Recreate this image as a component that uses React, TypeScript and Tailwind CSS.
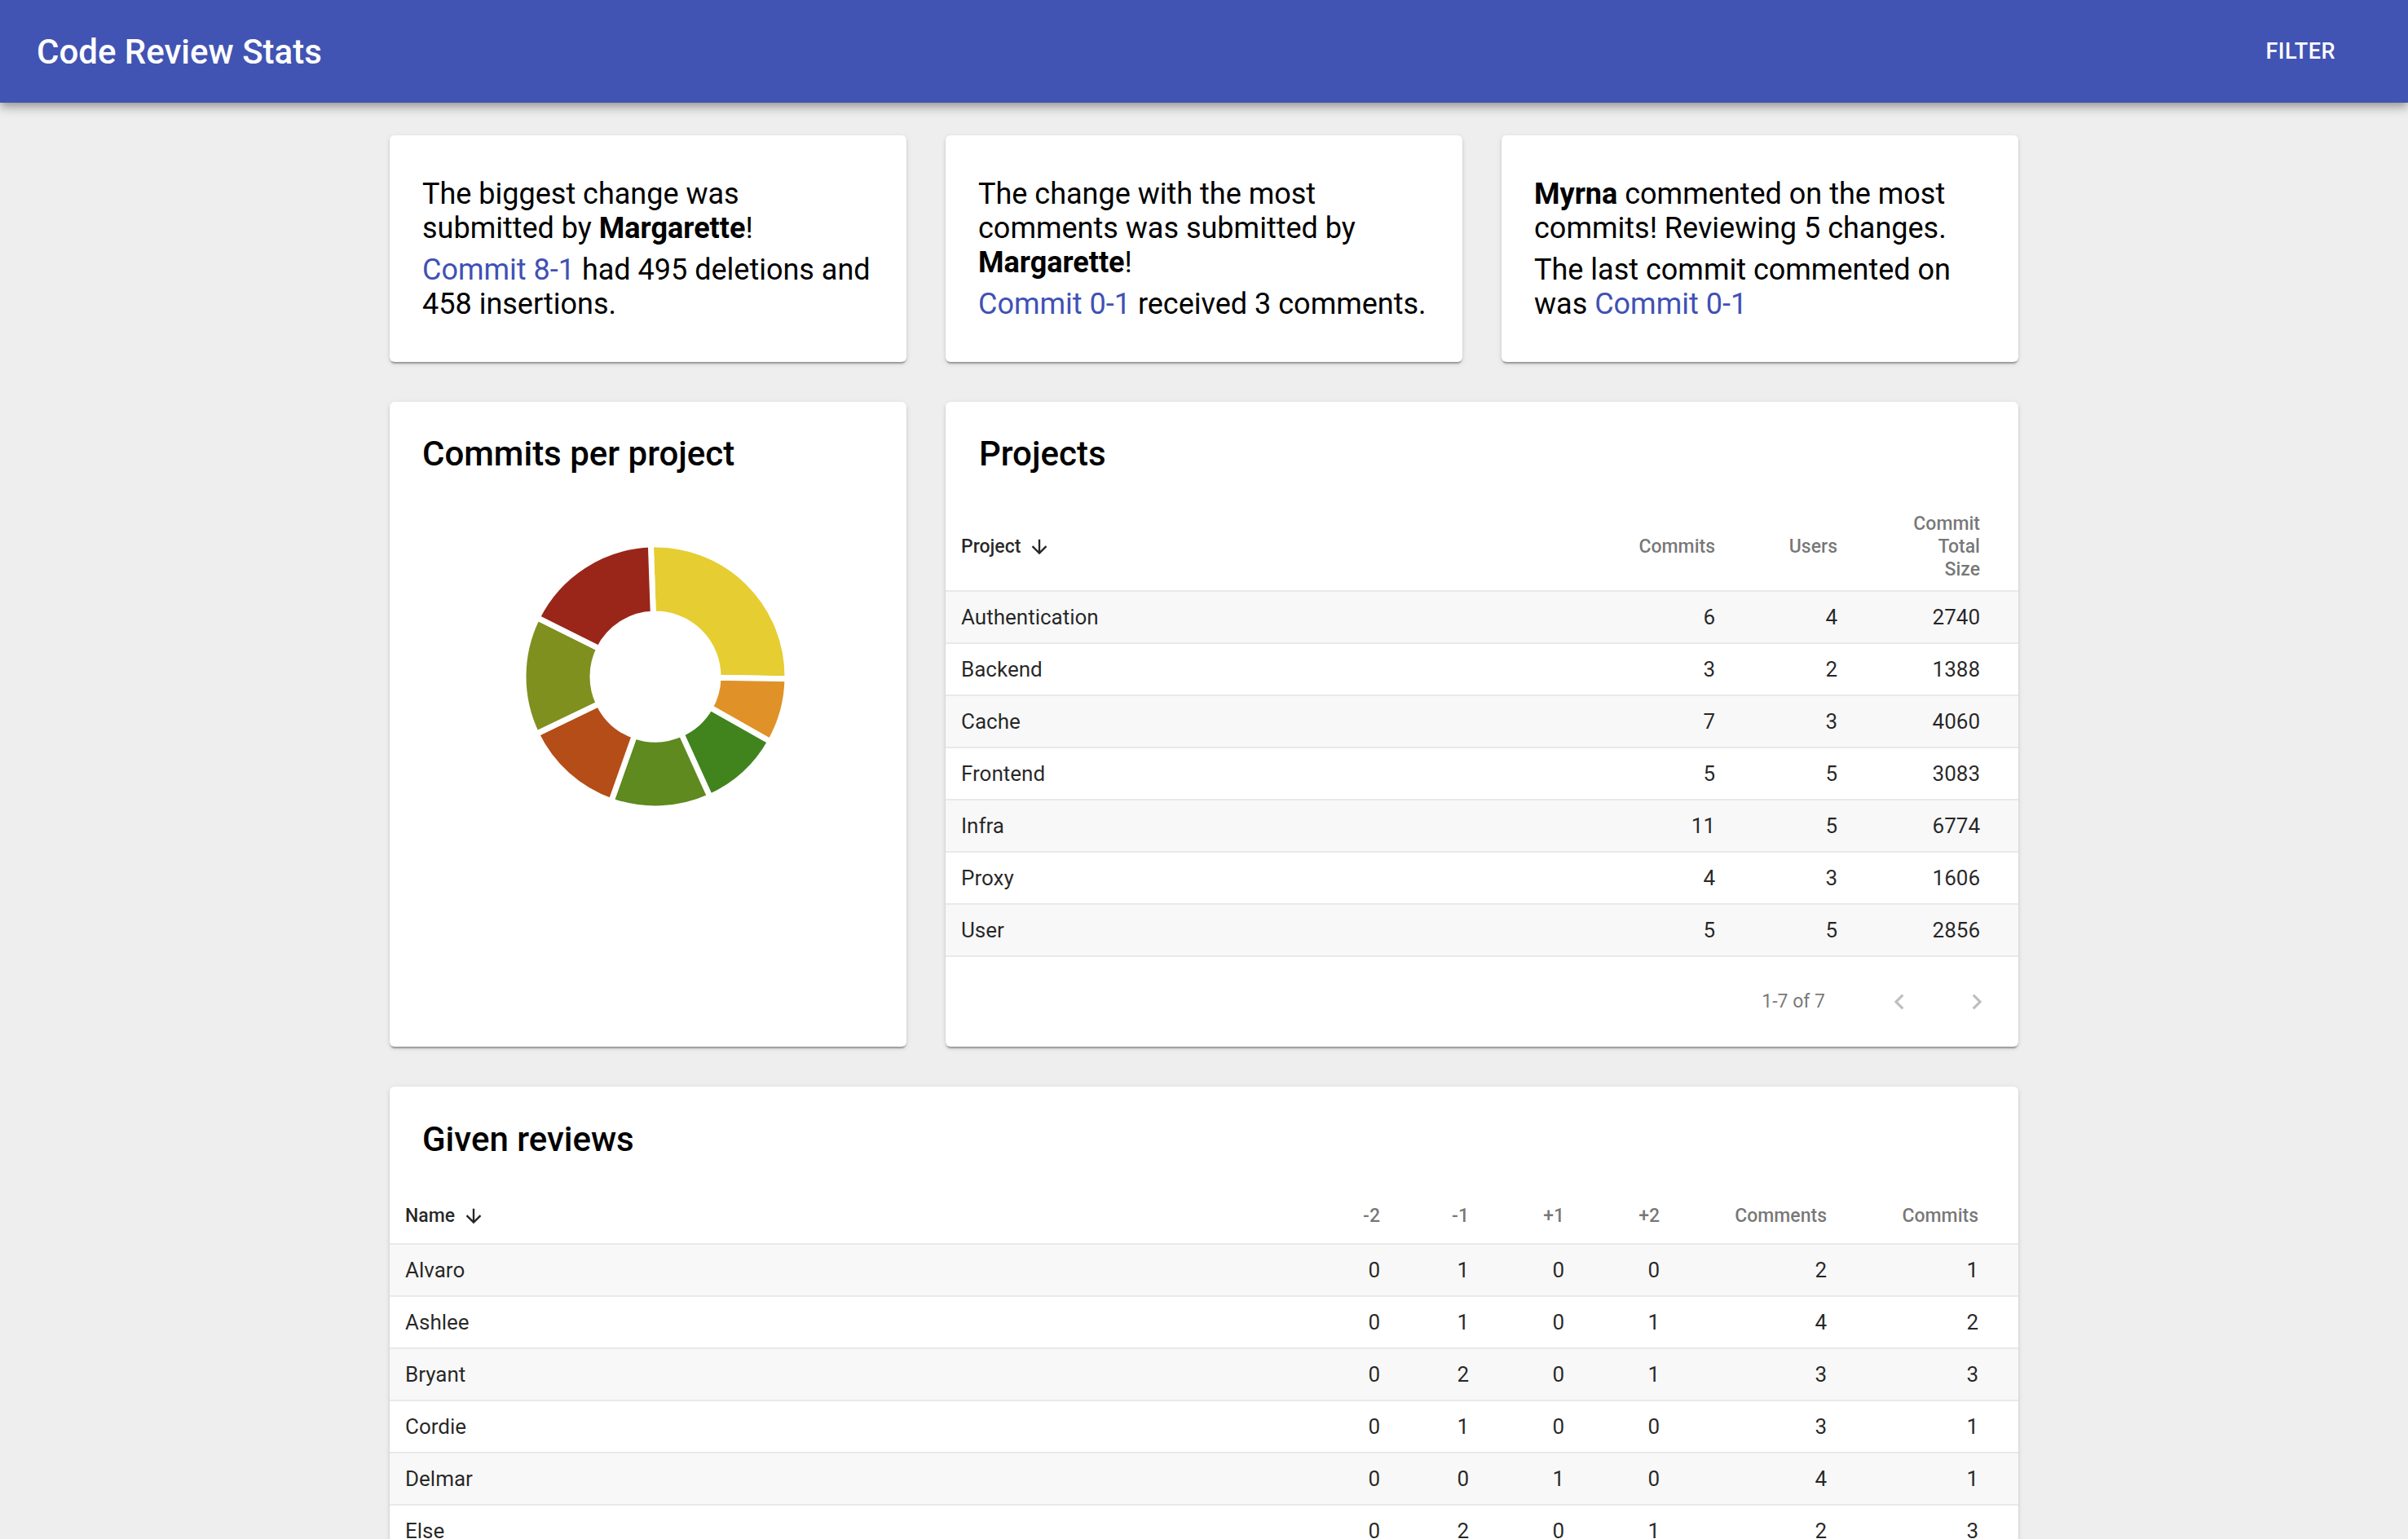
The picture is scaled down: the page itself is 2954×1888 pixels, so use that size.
import React from "react";

const projects: [string, number, number, number][] = [
  ["Authentication", 6, 4, 2740],
  ["Backend", 3, 2, 1388],
  ["Cache", 7, 3, 4060],
  ["Frontend", 5, 5, 3083],
  ["Infra", 11, 5, 6774],
  ["Proxy", 4, 3, 1606],
  ["User", 5, 5, 2856],
];

const reviews: [string, number, number, number, number, number, number][] = [
  ["Alvaro", 0, 1, 0, 0, 2, 1],
  ["Ashlee", 0, 1, 0, 1, 4, 2],
  ["Bryant", 0, 2, 0, 1, 3, 3],
  ["Cordie", 0, 1, 0, 0, 3, 1],
  ["Delmar", 0, 0, 1, 0, 4, 1],
  ["Else", 0, 2, 0, 1, 2, 3],
  ["Margarette", 1, 0, 2, 1, 3, 4],
  ["Myrna", 0, 1, 1, 2, 5, 2],
];

// gap centres measured clockwise from 12 o'clock
const slices = [
  { from: -2, to: 91, color: "#e6cd32" },
  { from: 91, to: 119.5, color: "#e09228" },
  { from: 119.5, to: 155.6, color: "#41841e" },
  { from: 155.6, to: 199.5, color: "#5e8a1f" },
  { from: 199.5, to: 244.3, color: "#b54d18" },
  { from: 244.3, to: 296.5, color: "#80901f" },
  { from: 296.5, to: 358, color: "#9a2619" },
];

const cardShadow =
  "shadow-[0_4px_2px_-2px_rgba(0,0,0,0.2),0_2px_2px_0_rgba(0,0,0,0.14),0_2px_6px_0_rgba(0,0,0,0.12)]";

function arcPath(cx: number, cy: number, r0: number, r1: number, a0: number, a1: number) {
  const p = (r: number, a: number) => {
    const rad = (a * Math.PI) / 180;
    return [cx + r * Math.sin(rad), cy - r * Math.cos(rad)];
  };
  const large = a1 - a0 > 180 ? 1 : 0;
  const [x1, y1] = p(r1, a0);
  const [x2, y2] = p(r1, a1);
  const [x3, y3] = p(r0, a1);
  const [x4, y4] = p(r0, a0);
  return `M${x1} ${y1} A${r1} ${r1} 0 ${large} 1 ${x2} ${y2} L${x3} ${y3} A${r0} ${r0} 0 ${large} 0 ${x4} ${y4} Z`;
}

const SortArrow = () => (
  <svg width="28" height="28" viewBox="0 0 24 24" className="ml-[9px]">
    <path fill="currentColor" d="M20 12l-1.41-1.41L13 16.17V4h-2v12.17l-5.58-5.59L4 12l8 8 8-8z" />
  </svg>
);

const Link = ({ children }: { children: React.ReactNode }) => (
  <a className="text-[#3f51b5] cursor-pointer">{children}</a>
);

const StatCard = ({ children }: { children: React.ReactNode }) => (
  <div className={`bg-white rounded-[6px] ${cardShadow} px-[40px] pt-[51px] pb-[50px] text-[36px] leading-[42px] text-black`}>
    {children}
  </div>
);

const CardTitle = ({ children }: { children: React.ReactNode }) => (
  <h2 className="text-[42px] leading-[50px] font-medium text-black">{children}</h2>
);

export default function App() {
  return (
    <div className="min-h-screen bg-[#eeeeee] font-[Roboto,'Noto_Sans',sans-serif] pb-[60px]">
      {/* Toolbar */}
      <header className="relative z-10 h-[126px] bg-[#4154b3] flex items-center justify-between pl-[45px] pr-[89px] shadow-[0_4px_8px_-2px_rgba(0,0,0,0.2),0_8px_10px_0_rgba(0,0,0,0.14),0_2px_19px_0_rgba(0,0,0,0.12)]">
        <h1 className="text-[42px] font-medium text-white">Code Review Stats</h1>
        <button className="text-[27px] font-medium text-white uppercase tracking-[0.5px]">Filter</button>
      </header>

      <main className="w-[1998px] mx-auto pt-[40px] flex flex-col gap-[49px]">
        {/* Highlights */}
        <div className="grid grid-cols-3 gap-[48px]">
          <StatCard>
            <p>
              The biggest change was submitted by <b className="font-bold">Margarette</b>!
            </p>
            <p className="mt-[9px]">
              <Link>Commit 8-1</Link> had 495 deletions and 458 insertions.
            </p>
          </StatCard>
          <StatCard>
            <p>
              The change with the most comments was submitted by <b className="font-bold">Margarette</b>!
            </p>
            <p className="mt-[9px]">
              <Link>Commit 0-1</Link> received 3 comments.
            </p>
          </StatCard>
          <StatCard>
            <p>
              <b className="font-bold">Myrna</b> commented on the most commits! Reviewing 5 changes.
            </p>
            <p className="mt-[9px]">
              The last commit commented on was <Link>Commit 0-1</Link>
            </p>
          </StatCard>
        </div>

        <div className="grid grid-cols-3 gap-[48px]">
          {/* Chart */}
          <div className={`bg-white rounded-[6px] ${cardShadow} pt-[39px] px-[40px]`}>
            <CardTitle>Commits per project</CardTitle>
            <svg width="554" height="400" viewBox="0 0 554 400" className="mt-[48px]">
              {slices.map((s) => (
                <path
                  key={s.color}
                  d={arcPath(286, 200, 77, 162, s.from, s.to)}
                  fill={s.color}
                  stroke="#ffffff"
                  strokeWidth={7}
                  strokeLinejoin="miter"
                />
              ))}
            </svg>
          </div>

          {/* Projects table */}
          <div className={`col-span-2 bg-white rounded-[6px] ${cardShadow} pt-[39px]`}>
            <div className="px-[41px]">
              <CardTitle>Projects</CardTitle>
            </div>
            <div className="mt-[36px] text-[26px]">
              <div className="grid grid-cols-[1fr_150px_150px_175px] items-center h-[108px] pl-[19px] pr-[47px] border-b-2 border-[#e9e9e9] text-[23px] font-medium text-black/55">
                <div className="flex items-center text-black/85">
                  Project
                  <SortArrow />
                </div>
                <div className="text-right">Commits</div>
                <div className="text-right">Users</div>
                <div className="w-[84px] ml-auto text-right leading-[28px]">Commit Total Size</div>
              </div>
              {projects.map(([name, commits, users, size], i) => (
                <div
                  key={name}
                  className={`grid grid-cols-[1fr_150px_150px_175px] items-center h-[64px] pl-[19px] pr-[47px] border-b-2 border-[#e9e9e9] text-black/85 ${i % 2 === 0 ? "bg-[#f8f8f8]" : "bg-white"}`}
                >
                  <div>{name}</div>
                  <div className="text-right">{commits}</div>
                  <div className="text-right">{users}</div>
                  <div className="text-right">{size}</div>
                </div>
              ))}
              <div className="h-[110px] flex items-center justify-end pr-[32px] text-[23px] text-black/55">
                <span>1-7 of 7</span>
                <svg width="38" height="38" viewBox="0 0 24 24" className="ml-[72px] text-black/25">
                  <path fill="currentColor" d="M15.41 7.41L14 6l-6 6 6 6 1.41-1.41L10.83 12z" />
                </svg>
                <svg width="38" height="38" viewBox="0 0 24 24" className="ml-[57px] text-black/25">
                  <path fill="currentColor" d="M10 6L8.59 7.41 13.17 12l-4.58 4.59L10 18l6-6z" />
                </svg>
              </div>
            </div>
          </div>
        </div>

        {/* Given reviews */}
        <div className={`bg-white rounded-[6px] ${cardShadow} pt-[40px]`}>
          <div className="px-[40px]">
            <CardTitle>Given reviews</CardTitle>
          </div>
          <div className="mt-[36px] text-[26px]">
            <div className="grid grid-cols-[1fr_100px_109px_117px_117px_205px_186px] items-center h-[68px] pl-[19px] pr-[49px] border-b-2 border-[#e9e9e9] text-[23px] font-medium text-black/55">
              <div className="flex items-center text-black/85">
                Name
                <SortArrow />
              </div>
              <div className="text-right">-2</div>
              <div className="text-right">-1</div>
              <div className="text-right">+1</div>
              <div className="text-right">+2</div>
              <div className="text-right">Comments</div>
              <div className="text-right">Commits</div>
            </div>
            {reviews.map(([name, ...vals], i) => (
              <div
                key={name}
                className={`grid grid-cols-[1fr_100px_109px_117px_117px_205px_186px] items-center h-[64px] pl-[19px] pr-[49px] border-b-2 border-[#e9e9e9] text-black/85 ${i % 2 === 0 ? "bg-[#f8f8f8]" : "bg-white"}`}
              >
                <div>{name}</div>
                {vals.map((v, j) => (
                  <div key={j} className="text-right">
                    {v}
                  </div>
                ))}
              </div>
            ))}
          </div>
        </div>
      </main>
    </div>
  );
}
